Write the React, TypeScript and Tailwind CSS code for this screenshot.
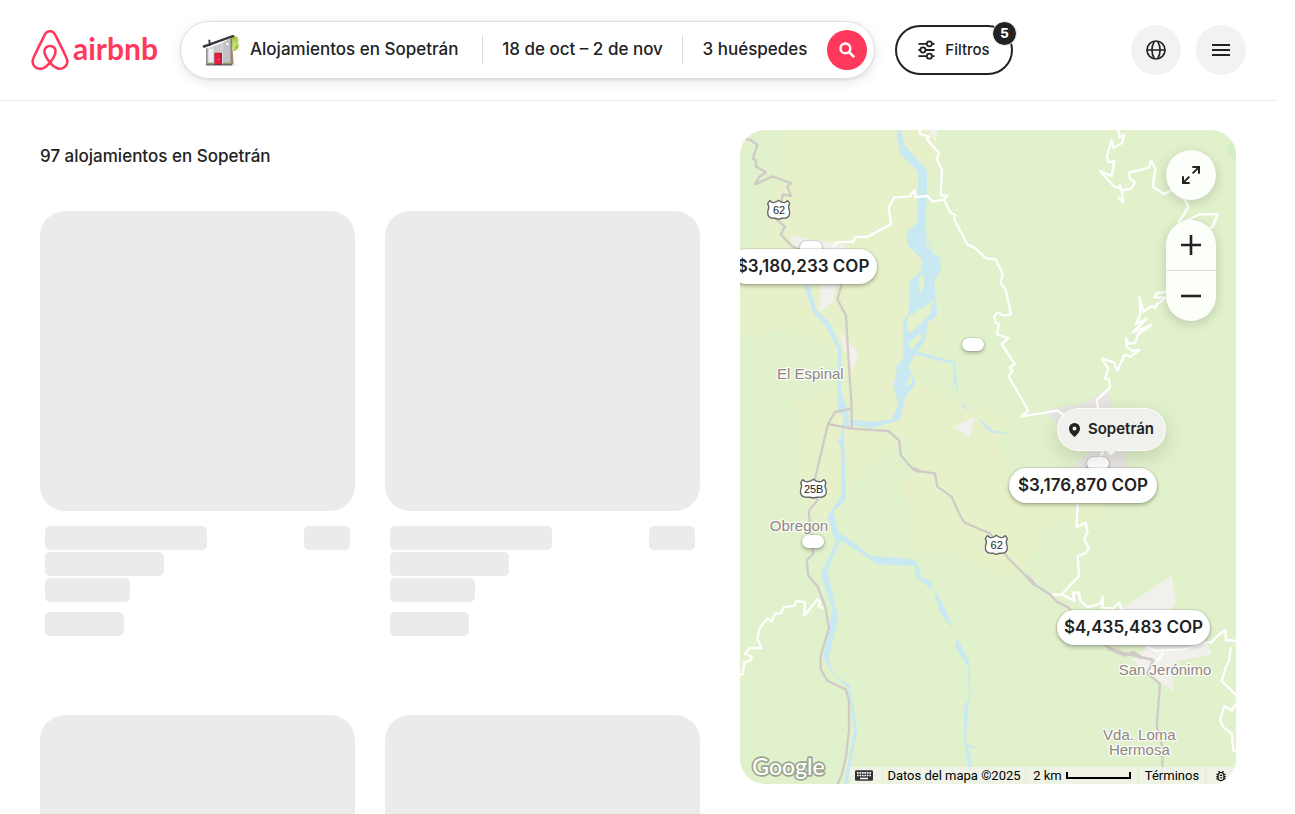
import type { ReactNode } from "react";
import { SiAirbnb } from "react-icons/si";
import { MdOutlineBugReport } from "react-icons/md";

const shadow = "shadow-[0_2px_4px_rgba(0,0,0,0.28),0_0_0_1px_rgba(0,0,0,0.08)]";

function HouseIcon() {
  return (
    <svg viewBox="0 0 150 150" className="size-[50px]" aria-hidden="true">
      <path d="M104 40l6-8 7-2 6 4 5 3 3 9-3 6 4 8-2 9-5 6-6 4-5-1z" fill="#b3cf5c" />
      <path d="M115 50l8 4 3 12-8 7-4-6z" fill="#cbe273" />
      <path d="M110 34l7-2 5 7-6 6z" fill="#95b746" />
      <path d="M124 60l4 5-4 8-4-3z" fill="#95b746" />
      <path d="M113 75l3 42h-5l-1-42z" fill="#b08a5d" />
      <ellipse cx="78" cy="120" rx="50" ry="3" fill="#e7e7e7" />
      <path d="M36 70l47-17v66H36z" fill="#d9d9db" />
      <path d="M83 53l25-15v81H83z" fill="#c2c2c6" />
      <path d="M42 72h12v40H42z" fill="#efeff0" />
      <path d="M57 64l24-9v25H57z" fill="#cacace" />
      <path d="M34 71l3-2v50h-3zM107 42l3-2v79h-3z" fill="#5a5a5f" />
      <path d="M40 44h6l1 18h-5z" fill="#3d3d42" />
      <path d="M22 62l93-33 3 6-92 34z" fill="#36363b" />
      <circle cx="97" cy="57" r="6" fill="#f6f6f8" stroke="#a5a5ac" strokeWidth="2" />
      <path d="M58 83h23v36H58z" fill="#a8243a" />
      <path d="M60 85h15l2 35H60z" fill="#ed1b3f" />
      <circle cx="72" cy="103" r="1.5" fill="#fff" />
      <path d="M36 113h21v5H36zM84 113h24v5H84z" fill="#86a06a" />
      <path d="M34 118h78v3H34z" fill="#42443d" />
    </svg>
  );
}

function Logo() {
  return (
    <a href="#" aria-label="airbnb" className="flex items-center gap-[3px] text-[#ff385c]">
      <SiAirbnb className="size-10" />
      <span className="pb-1 font-['Lato',sans-serif] text-[30px] leading-9 font-bold">airbnb</span>
    </a>
  );
}

function Header() {
  return (
    <header className="flex h-[101px] shrink-0 items-center border-b border-[#ebebeb] px-[30px]">
      <div className="flex w-[150px] shrink-0">
        <Logo />
      </div>
      <div className="flex h-[58px] w-[695px] shrink-0 items-center rounded-full border border-[#dddddd] text-[17px] font-medium shadow-[0_3px_12px_rgba(0,0,0,0.1),0_1px_2px_rgba(0,0,0,0.08)]">
        <button className="flex h-[30px] w-[302px] items-center gap-1 border-r border-[#dddddd] pl-3.5 whitespace-nowrap">
          <HouseIcon />
          <span className="pl-px">Alojamientos en Sopetrán</span>
        </button>
        <button className="h-[30px] w-[200px] border-r border-[#dddddd] whitespace-nowrap">18 de oct – 2 de nov</button>
        <button className="h-[30px] w-36 whitespace-nowrap">3 huéspedes</button>
        <button aria-label="Buscar" className="flex size-10 items-center justify-center rounded-full bg-[#ff385c] text-white">
          <svg viewBox="0 0 16 16" className="size-4" fill="none" stroke="currentColor" strokeWidth="2.5" aria-hidden="true">
            <circle cx="6.4" cy="6.4" r="4.9" />
            <path d="M10 10l5.2 5.2" />
          </svg>
        </button>
      </div>
      <button className="relative ml-5 flex h-[50px] w-[118px] shrink-0 items-center justify-center gap-2.5 rounded-full border-2 border-[#222222] text-[15px] font-medium">
        <svg viewBox="837 88 52 62" className="h-5 w-[17px]" fill="none" stroke="currentColor" strokeWidth="5.5" aria-hidden="true">
          <path d="M838 100h25M881 100h7M838 119h5M861 119h27M838 138h25M881 138h7" />
          <circle cx="872" cy="100" r="8" />
          <circle cx="852" cy="119" r="8" />
          <circle cx="872" cy="138" r="8" />
        </svg>
        Filtros
        <span className="absolute -top-1.5 -right-1.5 flex size-[25px] items-center justify-center rounded-full border border-white bg-[#222222] text-[13px] font-extrabold text-white">5</span>
      </button>
      <div className="ml-auto flex gap-[15px]">
        <button aria-label="Idioma" className="flex size-[50px] items-center justify-center rounded-full bg-[#f2f2f2]">
          <svg viewBox="0 0 60 60" className="size-5" fill="none" stroke="currentColor" strokeWidth="5" aria-hidden="true">
            <circle cx="30" cy="30" r="27" />
            <path d="M3 30h54M25 4C16 20 16 40 25 56M35 4c9 16 9 36 0 52" />
          </svg>
        </button>
        <button aria-label="Menú" className="flex size-[50px] items-center justify-center rounded-full bg-[#f2f2f2]">
          <svg viewBox="0 0 18 14" className="h-3.5 w-[18px]" stroke="currentColor" strokeWidth="2" aria-hidden="true">
            <path d="M0 2h18M0 7h18M0 12h18" />
          </svg>
        </button>
      </div>
    </header>
  );
}

function SkeletonCard() {
  return (
    <li>
      <div className="h-[300px] rounded-[25px] bg-[#ebebeb]" />
      <div className="flex flex-col gap-0.5 px-[5px] pt-[15px]">
        <div className="flex justify-between">
          <div className="h-6 w-[162px] rounded-[5px] bg-[#ebebeb]" />
          <div className="h-6 w-[46px] rounded-[5px] bg-[#ebebeb]" />
        </div>
        <div className="h-6 w-[119px] rounded-[5px] bg-[#ebebeb]" />
        <div className="h-6 w-[85px] rounded-[5px] bg-[#ebebeb]" />
        <div className="mt-2 h-6 w-[79px] rounded-[5px] bg-[#ebebeb]" />
      </div>
    </li>
  );
}

function Shield({ x, y, wide, children }: { x: number; y: number; wide?: boolean; children: ReactNode }) {
  const body = wide
    ? "M-32-27L-25-22Q-13-18 0-28Q13-18 25-22L32-27L38-18Q32-8 38 2Q42 22 26 25Q10 25 0 28Q-10 25-26 25Q-42 22-38 2Q-32-8-38-18Z"
    : "M-27-27L-20-22Q-9-19 0-28Q9-19 20-22L27-27L33-18Q27-8 32 2Q36 20 22 25Q8 25 0 29Q-8 25-22 25Q-36 20-32 2Q-27-8-33-18Z";
  return (
    <g transform={`translate(${x} ${y})`}>
      <path d={body} fill="#fff" stroke="#666" strokeWidth="4" strokeLinejoin="round" />
      <text x="1" y="14" textAnchor="middle" fontSize="33" fill="#222" stroke="none">
        {children}
      </text>
    </g>
  );
}

function MapCanvas() {
  return (
    <svg viewBox="0 0 1488 1962" preserveAspectRatio="xMinYMin slice" className="absolute inset-0 size-full font-['Liberation_Sans',sans-serif]" role="img" aria-label="Mapa">
      <rect width="1488" height="1962" fill="#e0f1cb" />
      <path
        fill="#e7f1c9"
        d="M142 0H590L595 45 560 205 555 315 590 440 600 620 520 750 600 780 660 820 750 850 790 860 775 930 795 1020 860 1090 960 1110 1090 1115 1075 1185 975 1170 925 1190 865 1290 845 1335 805 1340 735 1310 640 1260 600 1265 520 1270 525 1180 480 1070 520 1000 525 940 510 920 420 980 350 1040 330 1090 280 1180 200 1150 165 1020 185 890 150 815 295 775 290 690 240 630 140 600 70 605 0 625V390L75 315 100 180Z"
      />
      <path d="M1460 50Q1465 85 1488 90V30Z" fill="#d5eec2" />
      <g fill="#f2f0ed">
        <path d="M150 317L333 347 275 365 165 355ZM243 465H287L280 513 238 545ZM293 600L355 670 338 720 318 670ZM640 890L706 860 688 925ZM565 0H592L588 33Z" />
        <path d="M1145 1438L1295 1337 1307 1412 1285 1460 1395 1530 1417 1572 1300 1595V1685L1255 1650 1175 1590 1215 1560 1205 1490Z" />
        <path d="M915 840L1035 820 1105 775 1125 860 1150 950 1162 1015H1000L1045 965 950 880Z" fill="#e9e5e3" />
      </g>
      <g fill="#c8e8f2">
        <path d="M470 0H485L493 45 562 120 560 205 556 310 580 373 600 380 603 417 583 455 592 557 565 575 555 630 525 675 505 705 527 760 495 805 480 870 395 895 335 885 325 870H340L400 875 455 868 475 825 460 765 472 720 460 715 475 705 490 680V570L505 555 510 455 540 425 548 390 502 345 500 305 533 275 535 125 478 70Z" />
        <path d="M192 467H208L230 540 270 580 300 645 305 660 303 780 325 845 328 895 312 898 318 1110 280 1145 298 1215 300 1235 275 1290 263 1328 294 1462 265 1590 282 1630 330 1668 352 1798 322 1962H312L342 1798 325 1675 270 1620 250 1580 277 1440 243 1332 262 1290 288 1238 262 1160 305 1095 303 960 292 930 300 928 312 865 292 835 294 660 258 590 220 548Z" />
        <path d="M525 663L645 695 655 795 640 750 639 702 520 672ZM660 815L693 845 670 833ZM708 858L735 880 760 902 830 913 755 908 735 893Z" />
        <path d="M302 1210L395 1278 500 1286 530 1293 542 1340 574 1355 572 1377 525 1337V1307L412 1303 385 1283 298 1228Z" />
        <path d="M580 1375L610 1425 640 1497 600 1450ZM652 1525L688 1595 692 1700 684 1735 677 1838 718 1860 682 1850 697 1900 690 1930 684 1905 672 1840V1735L688 1700 683 1608 645 1552Z" />
      </g>
      <path d="M556 318L573 365 560 350ZM537 445L548 428 553 465 540 495ZM580 513L568 555 510 610 500 600 505 560ZM540 610L545 625 515 660 505 640ZM513 733L516 760 498 770Z" fill="#e4f1ca" />
      <g fill="none" stroke="#fff" strokeWidth="7" strokeLinejoin="round">
        <path d="M278 350L290 337 340 335 346 322 383 320 453 282 446 233 463 203 510 199 523 182 526 201 562 198 578 215 612 209 632 249 645 255 642 267 682 343 706 355 738 385 767 388 788 432 782 460 797 480 813 553 790 557 773 547 762 560 767 578 777 582 771 613 805 625 785 642 825 703 810 712 817 725 805 738 865 842 842 860 953 842 970 855" />
        <path d="M540 0V12L568 20 560 27 597 70 590 88 606 120 602 195 622 198 612 209" />
        <path d="M1132 0L1139 10 1137 23 1153 15 1145 40 1120 53 1115 30 1100 82 1107 97 1123 93 1115 138 1080 123 1123 170 1140 175V165L1143 180 1173 177 1185 157 1170 147 1167 128 1227 113 1234 92 1246 115 1238 170 1272 192 1300 180 1335 210 1345 230 1315 280M1146 178L1149 216 1135 202M1330 277L1378 253 1433 252 1418 290 1375 315" />
        <path d="M1278 485L1250 490 1243 502 1278 503 1248 525 1246 535 1235 528 1210 545 1199 502 1201 553 1188 582 1219 567 1178 607 1235 585 1195 612 1185 640H1165L1158 625 1160 650 1175 662 1197 660 1172 680 1153 675 1132 722 1122 697 1085 685 1105 717 1095 745 1107 747 1110 773 1070 810 1075 840M1090 965L1080 985M1013 1110L1010 1192 1037 1178 1043 1208 1032 1227 1047 1255 1035 1270 1013 1278 1017 1338 965 1393 935 1394M965 1393L1003 1412 1000 1387 1017 1388 1020 1410 1043 1433 1080 1420 1089 1400 1087 1433 1120 1435 1138 1418 1145 1440" />
        <path d="M1220 1550L1245 1562 1330 1558 1400 1537 1415 1537 1435 1515 1457 1500V1530L1488 1533M1472 1552L1468 1590 1457 1612 1445 1653 1488 1695M1488 1720L1475 1742 1453 1728 1440 1770 1450 1792 1475 1810 1480 1862H1488M1250 1595L1270 1567" />
        <path d="M250 1435L235 1428 240 1415 232 1408 193 1457 195 1417 170 1413 163 1427 132 1432 123 1450H105L95 1475 83 1465 60 1493 52 1525 64 1554H30L14 1572 35 1580 33 1590 13 1598 8 1633H0" />
      </g>
      <g fill="none" stroke="#d1cbc8" strokeWidth="7" strokeLinejoin="round">
        <path d="M10 25L32 30 52 45 38 87 48 90V110L78 127 58 140 45 163 98 139 154 160 142 170 153 198 128 193 125 215 108 268 135 290 122 313 155 348 250 390 306 420 305 465 292 508 318 557 322 630 335 835V895" />
        <path d="M335 836L285 846 264 882 335 896 445 903 478 932 482 975 518 1017 538 1024 585 1030 592 1070 635 1100 652 1140 673 1178 750 1210 805 1285 885 1365 930 1393 950 1415 985 1432 1040 1500 1105 1552 1155 1570 1240 1590 1222 1630 1260 1662 1250 1790 1267 1850V1962" />
        <path d="M264 882L218 1075 233 1110 206 1143 210 1185 219 1235V1272L200 1290 205 1338 232 1368 256 1430 267 1493 242 1578V1618L263 1653 317 1678 327 1710V1800L318 1880 305 1935 293 1962" />
        <path d="M518 1015L540 1024M860 1338L885 1365M1105 1555L1155 1575 1180 1568 1205 1584" strokeWidth="11" />
      </g>
      <Shield x={116} y={239}>62</Shield>
      <Shield x={220} y={1076} wide>25B</Shield>
      <Shield x={769} y={1244}>62</Shield>
      <g fontSize="45" fill="#8f8681" stroke="#fff" strokeOpacity="0.85" strokeWidth="8" strokeLinejoin="round" paintOrder="stroke" textAnchor="middle">
        <text x="211" y="748">El Espinal</text>
        <text x="177" y="1203">Obregon</text>
        <text x="1275" y="1635">San Jerónimo</text>
        <text x="1198" y="1830">Vda. Loma</text>
        <text x="1198" y="1876">Hermosa</text>
      </g>
      <text x="37" y="1934" fontFamily="Lato, sans-serif" fontSize="69" fontWeight="500" fill="#fff" stroke="#9aa58d" strokeWidth="10" strokeLinejoin="round" paintOrder="stroke">
        Google
      </text>
    </svg>
  );
}

const dots = [
  "left-[60px] top-[111px]",
  "left-[222px] top-[208px]",
  "left-[62px] top-[405px]",
  "left-[347px] top-[327px]",
];

const prices = [
  { label: "$3,180,233 COP", place: "left-[-11px] top-[119px] w-[148px]" },
  { label: "$3,176,870 COP", place: "left-[269px] top-[338px] w-[148px]" },
  { label: "$4,435,483 COP", place: "left-[317px] top-[480px] w-[153px]" },
];

function MapPanel() {
  return (
    <section aria-label="Mapa" className="relative h-full overflow-hidden rounded-[25px]">
      <MapCanvas />
      {dots.map((place) => (
        <span key={place} className={`absolute h-[13px] w-[22px] rounded-full bg-white ${shadow} ${place}`} />
      ))}
      {prices.map(({ label, place }) => (
        <button key={label} className={`absolute flex h-[35px] items-center justify-center rounded-full bg-white text-[17px] font-semibold whitespace-nowrap ${shadow} ${place}`}>
          {label}
        </button>
      ))}
      <div className="absolute top-[278px] left-[317px] flex h-[43px] w-[109px] items-center justify-center gap-2 rounded-full border border-white/80 bg-[#f0f0ed] text-[15px] font-semibold shadow-[0_6px_20px_rgba(0,0,0,0.14)]">
        <svg viewBox="0 0 11 14" className="h-3.5 w-[11px]" aria-hidden="true">
          <path fillRule="evenodd" d="M5.5 0A5.4 5.4 0 0 0 0 5.4C0 9 3 11.5 5.500 14 8 11.500 11 9 11 5.400A5.400 5.400 0 0 0 5.500 0Zm0 3.500a2 2 0 1 1 0 4 2 2 0 0 1 0-4Z" fill="#222" />
        </svg>
        Sopetrán
        <svg viewBox="0 0 12 6" className="absolute top-[41px] left-[47px] h-1.5 w-3" aria-hidden="true">
          <path d="M0 0h12L7 4.500q-1 .8-2 0Z" fill="#f0f0ed" />
        </svg>
      </div>
      <div className="absolute top-5 right-5 flex flex-col gap-5 text-[#222222]">
        <button aria-label="Ampliar el mapa" className="flex size-[50px] items-center justify-center rounded-full bg-[#fcfefa] shadow-[0_3px_12px_rgba(0,0,0,0.16)]">
          <svg viewBox="0 0 54 54" className="size-[18px]" fill="none" stroke="currentColor" strokeWidth="6" aria-hidden="true">
            <path d="M31 3h20v20M50 4L32 22M3 31v20h20M4 50l18-18" />
          </svg>
        </button>
        <div className="flex flex-col rounded-full bg-[#fcfefa] shadow-[0_3px_12px_rgba(0,0,0,0.16)]">
          <button aria-label="Acercar" className="flex size-[50px] items-center justify-center">
            <svg viewBox="0 0 20 20" className="size-5" stroke="currentColor" strokeWidth="2.6" aria-hidden="true">
              <path d="M0 10h20M10 0v20" />
            </svg>
          </button>
          <button aria-label="Alejar" className="flex h-[51px] w-[50px] items-center justify-center border-t border-[#dddddd]">
            <svg viewBox="0 0 20 20" className="size-5" stroke="currentColor" strokeWidth="2.6" aria-hidden="true">
              <path d="M0 10h20" />
            </svg>
          </button>
        </div>
      </div>
      <div className="absolute right-0 bottom-0 flex h-[17px] gap-px font-['Roboto',sans-serif] text-[13px] leading-[17px] whitespace-nowrap text-black *:flex *:items-center *:justify-center *:bg-[#f1f4ec]/80">
        <button aria-label="Combinaciones de teclas" className="w-8 pr-1">
          <svg viewBox="0 0 54 32" className="h-[11px] w-[18px]" aria-hidden="true">
            <rect width="54" height="32" rx="4" fill="#333" />
            <path d="M6 8h42M6 16h42" stroke="#fff" strokeWidth="5" strokeDasharray="5 2.4" />
            <path d="M15 25h24" stroke="#fff" strokeWidth="4" />
          </svg>
        </button>
        <span className="w-[142px]">Datos del mapa ©2025</span>
        <button className="w-28 gap-1">
          2 km
          <span className="h-[7px] w-[65px] border-2 border-t-0 border-black" />
        </button>
        <a href="#" className="w-[66px]">Términos</a>
        <button aria-label="Informar de un error" className="w-[30px]">
          <MdOutlineBugReport className="size-3.5" />
        </button>
      </div>
    </section>
  );
}

export default function App() {
  return (
    <div className="flex h-screen flex-col overflow-hidden bg-white pr-[19px] font-['Inter',sans-serif] text-[#222222]">
      <Header />
      <main className="grid min-h-0 flex-1 grid-cols-[660fr_496fr] gap-10 px-10">
        <section className="overflow-hidden pt-11">
          <h1 className="text-[17px] leading-[22px] font-medium">97 alojamientos en Sopetrán</h1>
          <ul className="mt-11 grid grid-cols-2 gap-x-[30px] gap-y-[79px]">
            <SkeletonCard />
            <SkeletonCard />
            <SkeletonCard />
            <SkeletonCard />
          </ul>
        </section>
        <div className="min-h-0 pt-[29px] pb-[30px]">
          <MapPanel />
        </div>
      </main>
    </div>
  );
}
